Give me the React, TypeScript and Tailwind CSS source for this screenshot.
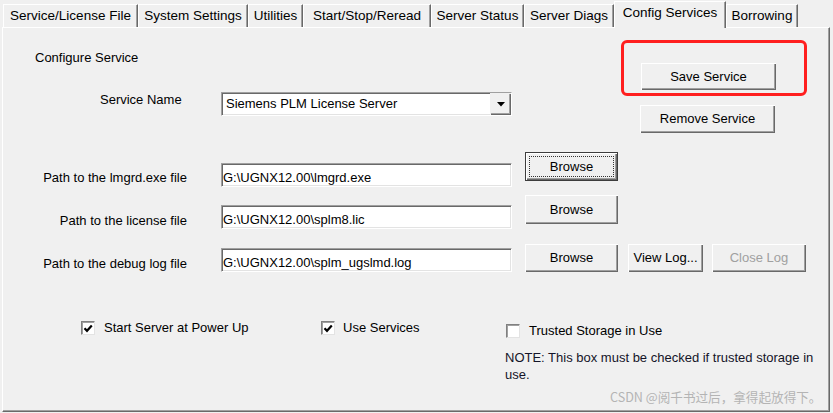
import React from 'react';

const raised = 'shadow-[inset_1px_1px_0_#ffffff,inset_-1px_-1px_0_#696969,inset_-2px_-2px_0_#a0a0a0]';

function Btn({ className = '', children, focus = false, disabled = false }: { className?: string; children: React.ReactNode; focus?: boolean; disabled?: boolean }) {
  return (
    <div className={`relative shrink-0 flex items-center justify-center bg-[#f0f0f0] leading-[16px] ${focus ? 'border border-[#3c3c3c]' : ''} ${className}`}>
      <div className={`absolute inset-0 ${raised}`} />
      {focus && <div className="absolute inset-[3px] border border-dotted border-[#333]" />}
      <span className={`relative ${disabled ? 'text-[#a0a0a0]' : 'text-black'}`}>{children}</span>
    </div>
  );
}

function Field({ className = '', text }: { className?: string; text: string }) {
  return (
    <div className={`shrink-0 w-[291px] h-[24px] bg-white border border-t-[#a0a0a0] border-l-[#a0a0a0] border-r-white border-b-white shadow-[inset_1px_1px_0_#696969,inset_-1px_-1px_0_#e3e3e3] pl-[1px] pt-[6px] leading-[16px] whitespace-nowrap overflow-hidden ${className}`}>
      {text}
    </div>
  );
}

function Check({ checked }: { checked: boolean }) {
  return (
    <div className="w-[14px] h-[14px] bg-white border border-t-[#808080] border-l-[#808080] border-r-[#e3e3e3] border-b-[#e3e3e3] shadow-[inset_1px_1px_0_#a0a0a0] flex items-center justify-center shrink-0">
      {checked && (
        <svg width="10" height="9" viewBox="0 0 10 9">
          <path d="M1.5 4.2 L4 6.8 L8.8 1.6" fill="none" stroke="#000" strokeWidth="2.2" />
        </svg>
      )}
    </div>
  );
}

const tabs = [
  { label: 'Service/License File', w: 'w-[135px]' },
  { label: 'System Settings', w: 'w-[110px]' },
  { label: 'Utilities', w: 'w-[55px]' },
  { label: 'Start/Stop/Reread', w: 'w-[128px]' },
  { label: 'Server Status', w: 'w-[93px]' },
  { label: 'Server Diags', w: 'w-[90px]' },
  { label: 'Config Services', w: 'w-[112px]', active: true },
  { label: 'Borrowing', w: 'w-[72px]' },
];

export default function App() {
  return (
    <div className="w-[833px] h-[413px] bg-[#f0f0f0] overflow-hidden font-['Liberation_Sans',Arial,sans-serif] text-[13px] text-black">
      {/* Tabs */}
      <div className="flex items-end h-[27px] pl-[3px]">
        {tabs.map((t) =>
          t.active ? (
            <div
              key={t.label}
              className={`${t.w} shrink-0 relative z-10 h-[27px] -mb-[1px] bg-[#f0f0f0] border-t border-l border-t-white border-l-white border-r border-r-[#696969] shadow-[inset_-1px_0_0_#a0a0a0] text-center pt-[3px] leading-[16px] text-[13.5px] whitespace-nowrap`}
            >
              {t.label}
            </div>
          ) : (
            <div
              key={t.label}
              className={`${t.w} shrink-0 h-[23px] bg-[#f0f0f0] border-t border-l border-t-white border-l-white border-r border-r-[#696969] shadow-[inset_-1px_0_0_#a0a0a0] text-center pt-[3px] leading-[16px] text-[13.5px] whitespace-nowrap`}
            >
              {t.label}
            </div>
          )
        )}
      </div>

      {/* Panel */}
      <div className="ml-[2px] w-[828px] h-[385px] bg-[#f0f0f0] border-t border-l border-t-white border-l-white border-r border-b border-r-[#696969] border-b-[#696969] shadow-[inset_-1px_-1px_0_#a0a0a0] flex flex-col">
        {/* Section A */}
        <div className="flex h-[124px]">
          <div className="w-[618px] shrink-0 flex flex-col">
            <div className="pl-[32px] pt-[22px] leading-[16px]">Configure Service</div>
            <div className="flex items-start pl-[97px] mt-[26px]">
              <div className="w-[121px] shrink-0 leading-[16px]">Service Name</div>
              <div className="w-[291px] shrink-0 h-[24px] bg-white border border-t-[#a0a0a0] border-l-[#a0a0a0] border-r-white border-b-white shadow-[inset_1px_1px_0_#696969,inset_-1px_-1px_0_#e3e3e3] flex items-stretch">
                <div className="flex-1 flex items-center pl-[4px] leading-[16px] whitespace-nowrap">Siemens PLM License Server</div>
                <div className="w-[21px] bg-[#f0f0f0] shadow-[inset_1px_1px_0_#f0f0f0,inset_-1px_-1px_0_#696969,inset_-2px_-2px_0_#a0a0a0] flex items-center justify-center">
                  <svg width="8" height="5" viewBox="0 0 8 5">
                    <polygon points="0,0 8,0 4,4.5" fill="#000" />
                  </svg>
                </div>
              </div>
            </div>
          </div>
          <div className="flex flex-col">
            <div className="mt-[12px] w-[186px] h-[56px] border-[3px] border-[#ff1f1f] rounded-[6px] pl-[17px] pt-[20px]">
              <Btn className="w-[135px] h-[27px]">Save Service</Btn>
            </div>
            <Btn className="mt-[9px] ml-[19px] w-[135px] h-[28px]">Remove Service</Btn>
          </div>
        </div>

        {/* Row 1 */}
        <div className="flex items-start h-[43px]">
          <div className="w-[218px] shrink-0 pr-[34px] text-right leading-[16px] mt-[18px] whitespace-nowrap">Path to the lmgrd.exe file</div>
          <Field className="mt-[11px]" text={'G:\\UGNX12.00\\lmgrd.exe'} />
          <Btn className="ml-[13px] w-[93px] h-[29px]" focus>Browse</Btn>
        </div>

        {/* Row 2 */}
        <div className="flex items-start h-[49px]">
          <div className="w-[218px] shrink-0 pr-[34px] text-right leading-[16px] mt-[18px] whitespace-nowrap">Path to the license file</div>
          <Field className="mt-[10px]" text={'G:\\UGNX12.00\\splm8.lic'} />
          <Btn className="ml-[13px] w-[93px] h-[29px]">Browse</Btn>
        </div>

        {/* Row 3 */}
        <div className="flex items-start h-[28px]">
          <div className="w-[218px] shrink-0 pr-[34px] text-right leading-[16px] mt-[12px] whitespace-nowrap">Path to the debug log file</div>
          <Field className="mt-[4px]" text={'G:\\UGNX12.00\\splm_ugslmd.log'} />
          <Btn className="ml-[13px] w-[93px] h-[28px]">Browse</Btn>
          <Btn className="ml-[10px] w-[75px] h-[28px]">View Log...</Btn>
          <Btn className="ml-[9px] w-[94px] h-[28px]" disabled>Close Log</Btn>
        </div>

        {/* Checkboxes */}
        <div className="flex items-start mt-[48px]">
          <div className="w-[318px] shrink-0 pl-[78px] flex items-center h-[16px] gap-[9px]">
            <Check checked />
            <span className="leading-[16px] whitespace-nowrap">Start Server at Power Up</span>
          </div>
          <div className="w-[185px] shrink-0 flex items-center h-[16px] gap-[8px]">
            <Check checked />
            <span className="leading-[16px] whitespace-nowrap">Use Services</span>
          </div>
          <div className="flex flex-col shrink-0">
            <div className="mt-[3px] flex items-center h-[16px] gap-[9px]">
              <Check checked={false} />
              <span className="leading-[16px] whitespace-nowrap">Trusted Storage in Use</span>
            </div>
            <div className="-ml-[1px] mt-[10px] leading-[17px] text-[#141428] whitespace-nowrap">
              NOTE: This box must be checked if trusted storage in
              <br />
              use.
            </div>
            <div className="ml-[104px] mt-[6px] leading-[16px] text-[12.6px] text-[#b4b4b4] whitespace-nowrap font-['Noto_Sans_CJK_SC',sans-serif]">
              CSDN @阅千书过后，拿得起放得下。
            </div>
          </div>
        </div>
      </div>
    </div>
  );
}
